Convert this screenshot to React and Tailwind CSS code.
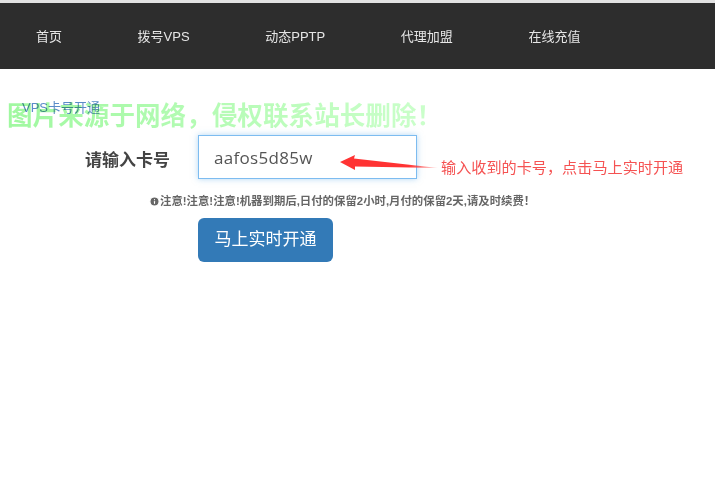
import { Info } from "lucide-react";

const CJK = "font-['Liberation_Sans','Noto_Sans_CJK_SC',sans-serif]";

const navItems = ["首页", "拨号VPS", "动态PPTP", "代理加盟", "在线充值"];

const Header = () => (
  <nav className="mt-[3px] h-[66px] bg-[#2d2d2d] flex items-center pl-9 pt-px gap-[75.6px] text-[13px] text-[#e6e6e6]">
    {navItems.map((item) => (
      <a key={item} href="#" className="whitespace-nowrap">
        {item}
      </a>
    ))}
  </nav>
);

const Arrow = () => (
  <svg
    className="absolute left-[340px] top-[152px]"
    width="100"
    height="20"
    viewBox="0 0 100 20"
  >
    <defs>
      <linearGradient id="tail" x1="0" x2="1" y1="0" y2="0">
        <stop offset="0" stopColor="#ff3333" />
        <stop offset="0.7" stopColor="#ff3333" />
        <stop offset="1" stopColor="#ff3333" stopOpacity="0.2" />
      </linearGradient>
    </defs>
    <path d="M0 10 L15 3 L14 6.5 L98 16 L15 14.5 L15 18 Z" fill="url(#tail)" />
  </svg>
);

const App = () => {
  return (
    <div className={`${CJK} relative w-[715px] h-[500px] overflow-hidden bg-white`}>
      <div className="h-[3px] bg-[#e2e2e2] absolute top-0 left-0 w-full" />
      <Header />

      <div className="pl-[22px] pt-[30px] text-[13px] leading-[18px] text-[#5b8cc8]">VPS卡号开通</div>

      {/* 卡号表单 */}
      <form className="mt-[18px]">
        <div className="flex items-center">
          <label className="ml-[85px] w-[113px] pt-[7px] text-[17px] font-bold text-[#444]">请输入卡号</label>
          <div className="w-[219px] h-[44px] border border-[#7dbcf0] shadow-[0_0_6px_rgba(102,175,233,0.5)] pl-[15px] pt-px flex items-center font-['Open_Sans',sans-serif] text-[17px] tracking-[0.3px] text-[#555]">
            aafos5d85w
          </div>
        </div>
        <p className="mt-[15px] ml-[149px] h-[14px] flex items-center text-[11.4px] leading-[14px] font-bold text-[#666] whitespace-nowrap">
          <Info size={11} className="fill-[#666] text-white" strokeWidth={2.5} />
          注意!注意!注意!机器到期后,日付的保留2小时,月付的保留2天,请及时续费！
        </p>
        <button
          type="button"
          className="mt-[10px] ml-[198px] w-[135px] h-[44px] rounded-md bg-[#337ab7] text-[17px] text-white"
        >
          马上实时开通
        </button>
      </form>

      {/* 图片水印和标注 */}
      <div className="absolute left-[7px] top-[102px] text-[25.6px] leading-[28px] font-bold bg-gradient-to-r from-[#a0f8a0] to-[#ccffcc] bg-clip-text text-transparent mix-blend-multiply whitespace-nowrap">
        图片来源于网络，侵权联系站长删除！
      </div>
      <Arrow />
      <div className="absolute left-[441px] top-[158px] text-[15.15px] leading-[20px] text-[#f55252] whitespace-nowrap">
        输入收到的卡号，点击马上实时开通
      </div>
    </div>
  );
};

export default App;
